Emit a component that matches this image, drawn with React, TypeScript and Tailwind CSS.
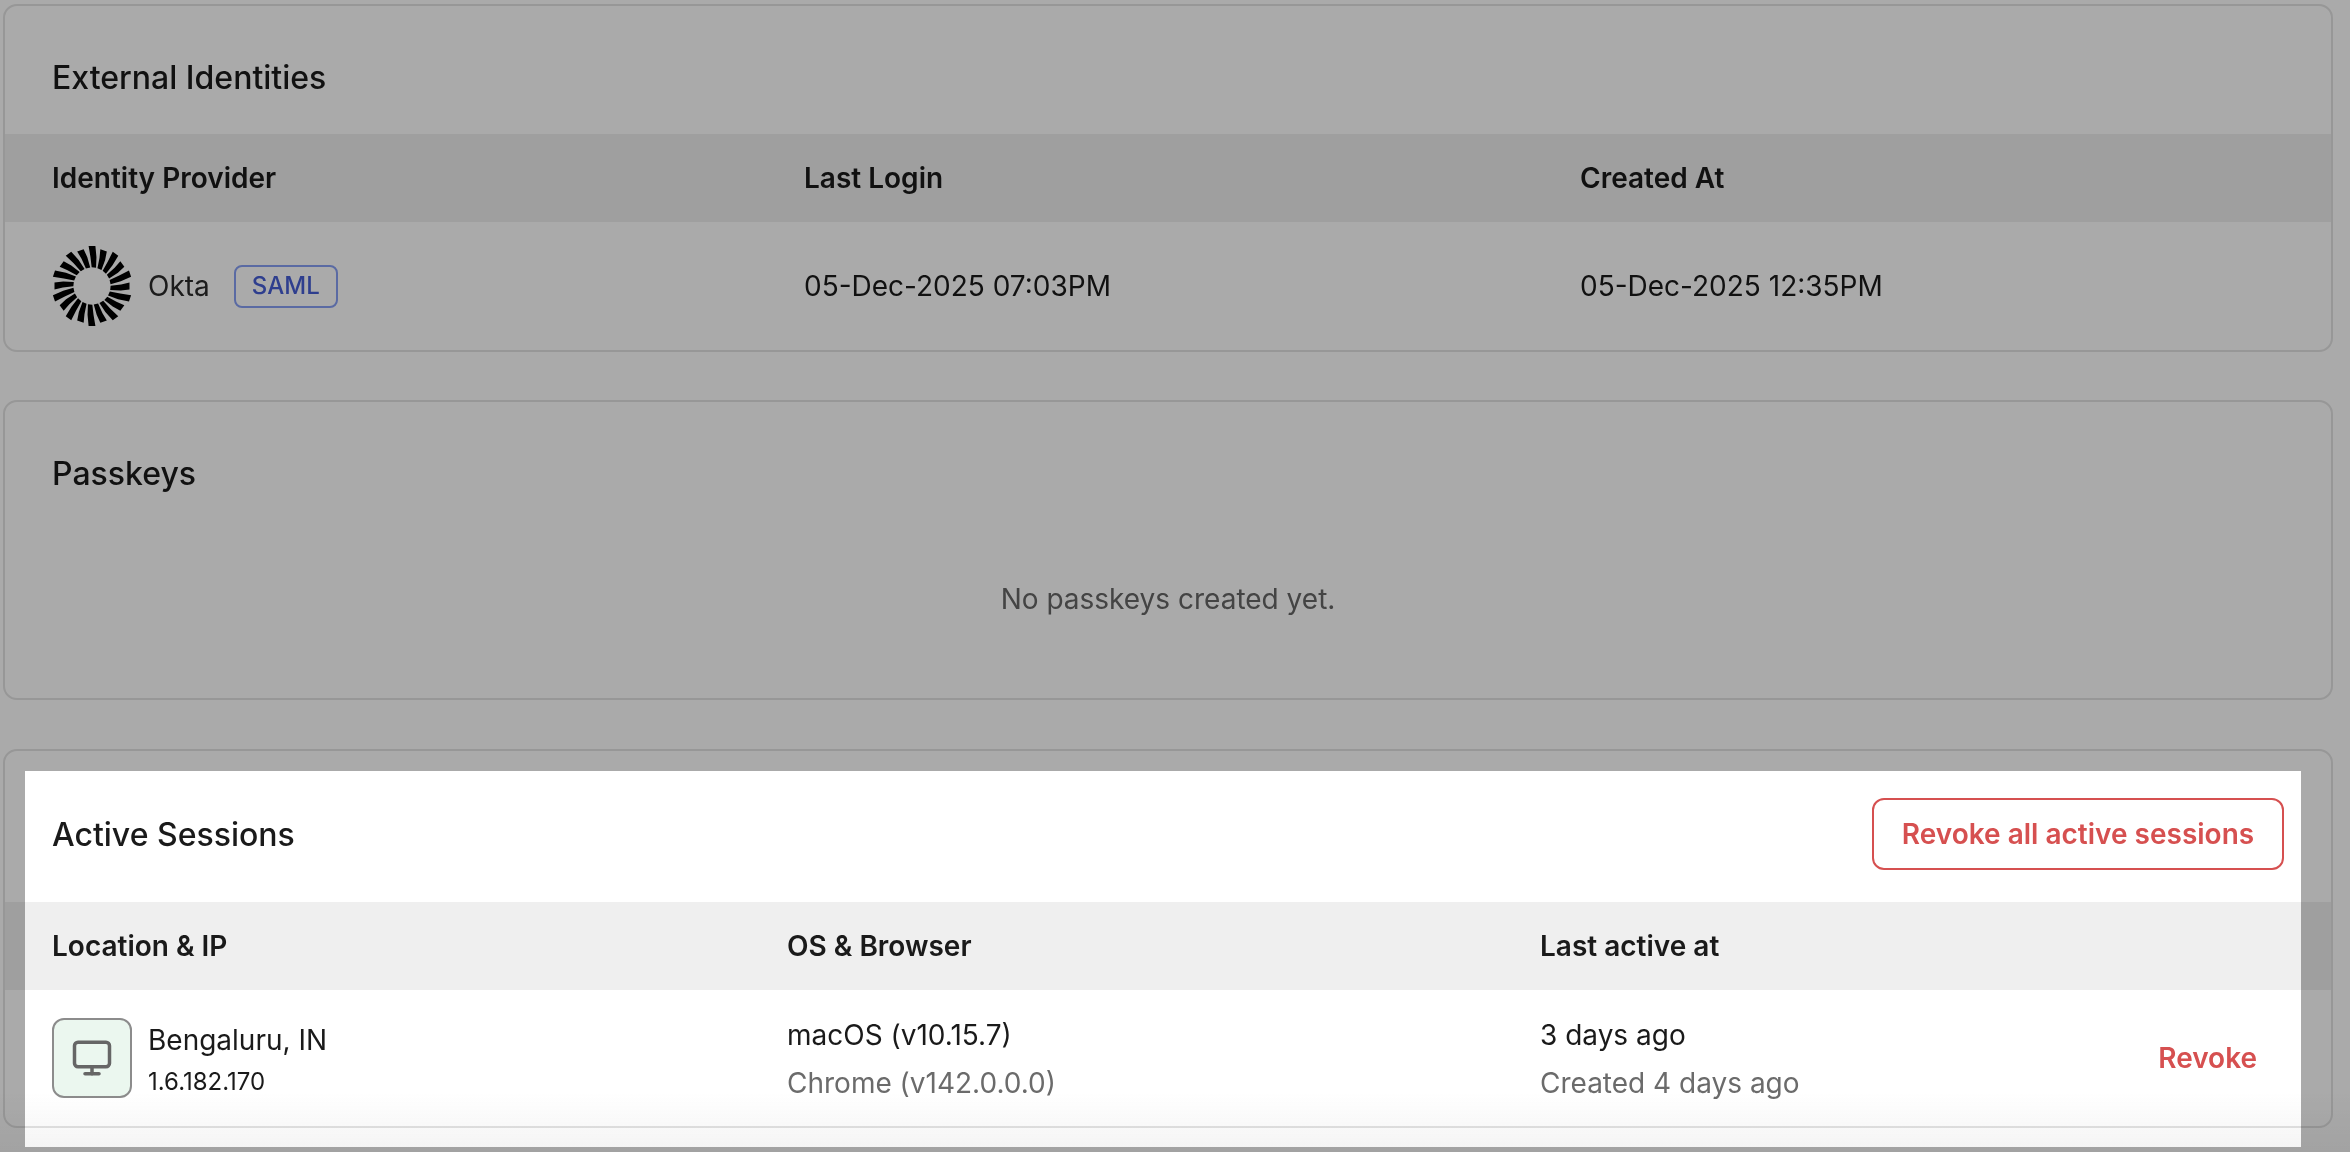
import { Monitor } from "lucide-react";

function OktaMark() {
  const rays = Array.from({ length: 20 }, (_, i) => i);
  return (
    <svg width="80" height="80" viewBox="-40 -40 80 80" className="shrink-0">
      {rays.map((i) => {
        const a = (i * 18 * Math.PI) / 180;
        const skew = 0.1;
        const r0 = 18.5;
        const rm = 29;
        const r1 = i % 2 === 0 ? 40 : 37.5;
        const w0 = 2.2;
        const wm = 3;
        const w1 = 3.4;
        const px = (r: number, off: number, s: number) => {
          const b = a + s;
          return `${(Math.sin(b) * r + Math.cos(b) * off).toFixed(2)},${(-Math.cos(b) * r + Math.sin(b) * off).toFixed(2)}`;
        };
        return (
          <polygon
            key={i}
            fill="#000"
            points={`${px(r0, -w0, skew)} ${px(r0, w0, skew)} ${px(rm, wm, skew * 0.5)} ${px(r1, w1, 0)} ${px(r1, -w1, 0)} ${px(rm, -wm, skew * 0.5)}`}
          />
        );
      })}
    </svg>
  );
}

function CardTitle({ children }: { children: React.ReactNode }) {
  return <h2 className="text-[32px] leading-[46px] font-medium text-[#1a1a1a]">{children}</h2>;
}

export default function App() {
  return (
    <div className="relative h-[1152px] w-full overflow-hidden bg-white font-['Inter',sans-serif] text-[#1a1a1a]">
      <div className="flex flex-col pl-[3px] pt-[4px]">
        <section className="h-[348px] w-[2330px] overflow-hidden rounded-[14px] border-2 border-[#e3e3e3]">
          <div className="flex h-[128px] items-start px-[47px] pt-[49px]">
            <CardTitle>External Identities</CardTitle>
          </div>
          <div className="grid h-[88px] grid-cols-[752px_776px_1fr] items-center bg-[#efefef] px-[47px] text-[28px] font-semibold">
            <span>Identity Provider</span>
            <span>Last Login</span>
            <span>Created At</span>
          </div>
          <div className="grid h-[128px] grid-cols-[752px_776px_1fr] items-center px-[47px] text-[28px]">
            <div className="flex items-center">
              <OktaMark />
              <span className="ml-[16px] text-[#2a2a2a]">Okta</span>
              <span className="ml-[24px] flex h-[43px] w-[104px] items-center justify-center rounded-[8px] border-2 border-[#87a0f5] text-[24px] font-medium text-[#465ed6]">
                SAML
              </span>
            </div>
            <span>05-Dec-2025 07:03PM</span>
            <span>05-Dec-2025 12:35PM</span>
          </div>
        </section>

        <section className="mt-[48px] h-[300px] w-[2330px] rounded-[14px] border-2 border-[#e3e3e3]">
          <div className="px-[47px] pt-[49px]">
            <CardTitle>Passkeys</CardTitle>
          </div>
          <p className="mt-[82px] text-center text-[28px] leading-[40px] text-[#666]">No passkeys created yet.</p>
        </section>

        <section className="mt-[49px] h-[379px] w-[2330px] overflow-hidden rounded-[14px] border-2 border-[#e3e3e3]">
          <div className="flex h-[151px] items-start justify-between pl-[47px] pr-[47px] pt-[47px]">
            <div className="pt-[14px]">
              <CardTitle>Active Sessions</CardTitle>
            </div>
            <button className="h-[72px] w-[412px] rounded-[12px] border-2 border-[#d65050] text-[28px] font-semibold text-[#d65050]">
              Revoke all active sessions
            </button>
          </div>
          <div className="grid h-[88px] grid-cols-[735px_753px_1fr] items-center bg-[#efefef] px-[47px] text-[28px] font-semibold">
            <span>Location &amp; IP</span>
            <span>OS &amp; Browser</span>
            <span>Last active at</span>
          </div>
          <div className="grid h-[136px] grid-cols-[735px_753px_1fr_auto] items-center pl-[47px] pr-[74px] text-[28px]">
            <div className="flex items-center">
              <div className="flex h-[80px] w-[80px] items-center justify-center rounded-[12px] border-2 border-[#8c8c8c] bg-[#ebf7ef]">
                <Monitor size={42} strokeWidth={2} color="#666666" />
              </div>
              <div className="ml-[16px] pt-[2px]">
                <div className="leading-[46px]">Bengaluru, IN</div>
                <div className="text-[24px] leading-[38px]">1.6.182.170</div>
              </div>
            </div>
            <div className="pt-[2px]">
              <div className="leading-[48px]">macOS (v10.15.7)</div>
              <div className="leading-[48px] text-[#6b6b6b]">Chrome (v142.0.0.0)</div>
            </div>
            <div className="pt-[2px]">
              <div className="leading-[48px]">3 days ago</div>
              <div className="leading-[48px] text-[#6b6b6b]">Created 4 days ago</div>
            </div>
            <button className="font-semibold text-[#d65050]">Revoke</button>
          </div>
        </section>
      </div>

      <div className="pointer-events-none absolute inset-x-0 bottom-0 h-[60px] bg-gradient-to-b from-transparent to-[#f4f4f4] mix-blend-multiply" />
      <div className="pointer-events-none absolute left-[25px] top-[771px] h-[376px] w-[2276px] shadow-[0_0_0_3000px_rgba(0,0,0,0.333)]" />
    </div>
  );
}
